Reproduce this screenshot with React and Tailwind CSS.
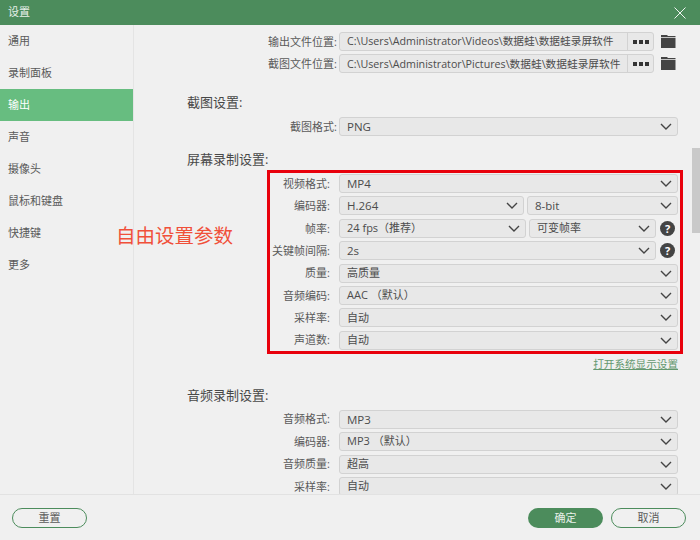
import React from "react";

const FONT = '"Open Sans", "Noto Sans CJK SC", sans-serif';

function Chevron() {
  return (
    <svg width="12" height="7" viewBox="0 0 12 7" fill="none" className="shrink-0">
      <path d="M1 1 L6 6 L11 1" stroke="#444" strokeWidth="1.4" />
    </svg>
  );
}

function Select({ text, cjk = false, className = "flex-1" }) {
  return (
    <div className={`${className} h-[19px] min-w-0 flex items-center justify-between pl-[7px] pr-[5px] bg-[#e8e8e8] border border-[#d2d2d2] rounded-[3px] ${cjk ? "text-[11px]" : "text-[11.5px]"} text-[#4c4c4c] whitespace-pre`}>
      <span>{text}</span>
      <Chevron />
    </div>
  );
}

function Help() {
  return (
    <div className="w-[15px] h-[15px] shrink-0 rounded-full bg-[#444] text-white text-[11px] font-bold flex items-center justify-center leading-none">?</div>
  );
}

function Folder() {
  return (
    <svg width="15" height="13" viewBox="0 0 15 13" className="shrink-0">
      <path d="M0 0 H6 L7 1 H14.5 V2.2 H0 Z" fill="#444" />
      <path d="M0 3 H14.5 V13 H0 Z" fill="#444" />
    </svg>
  );
}

function PathRow({ label, path }) {
  return (
    <div className="flex items-center h-[19px]">
      <div className="w-[152px] shrink-0 pr-[2px] pt-[1px] text-right text-[11px] text-[#5a5a5a]">{label}</div>
      <div className="w-[315px] h-[19px] flex items-center bg-[#e8e8e8] border border-[#d2d2d2] rounded-[3px] text-[10.7px] text-[#4c4c4c]">
        <span className="flex-1 pl-[7px] whitespace-nowrap">{path}</span>
        <span className="w-[26px] h-full shrink-0 border-l border-[#d2d2d2] flex items-center justify-center gap-[2px]">
          <i className="w-[4px] h-[4px] bg-[#333]" />
          <i className="w-[4px] h-[4px] bg-[#333]" />
          <i className="w-[4px] h-[4px] bg-[#333]" />
        </span>
      </div>
      <div className="ml-[7px]"><Folder /></div>
    </div>
  );
}

function Row({ label, labelW = "w-[152px] pr-[9px]", children }) {
  return (
    <div className="flex items-center h-[19px]">
      <div className={`${labelW} shrink-0 pt-[1px] text-right text-[11px] text-[#5a5a5a] whitespace-nowrap`}>{label}</div>
      <div className="flex-1 min-w-0 flex items-center gap-[3px]">{children}</div>
    </div>
  );
}

const Heading = ({ children, className }) => (
  <div className={`${className} h-[20px] leading-[18px] text-[13px] text-[#484848]`}>{children}</div>
);

const nav = ["通用", "录制面板", "输出", "声音", "摄像头", "鼠标和键盘", "快捷键", "更多"];
const BOX = "w-[69px] pr-[9px]";

export default function App() {
  return (
    <div className="relative w-[700px] h-[540px] flex flex-col bg-[#f0f0f0] overflow-hidden" style={{ fontFamily: FONT }}>
      <div className="h-[25px] shrink-0 flex items-center justify-between pl-[8px] pr-[14px] bg-[#4c8c5c] text-[11px] text-[#e8f0ea]">
        <span>设置</span>
        <svg width="12" height="12" viewBox="0 0 12 12" fill="none">
          <path d="M0.5 0.5 L11.5 11.5 M11.5 0.5 L0.5 11.5" stroke="#eef4f0" strokeWidth="1" />
        </svg>
      </div>

      <div className="flex-1 min-h-0 flex">
        <div className="w-[134px] shrink-0 border-r border-[#e4e4e4]">
          {nav.map((n) => (
            <div key={n} className={`h-[32px] flex items-center pl-[8px] pt-[1px] text-[11px] ${n === "输出" ? "bg-[#67bd80] text-white" : "text-[#5a5a5a]"}`}>{n}</div>
          ))}
        </div>

        <div className="flex-1 min-w-0 overflow-hidden pt-[7px] pl-[53px] pr-[22px]">
          <div className="flex flex-col gap-[3.4px]">
            <PathRow label="输出文件位置:" path="C:\Users\Administrator\Videos\数据蛙\数据蛙录屏软件" />
            <PathRow label="截图文件位置:" path="C:\Users\Administrator\Pictures\数据蛙\数据蛙录屏软件" />
          </div>

          <Heading className="mt-[19.6px]">截图设置:</Heading>
          <div className="mt-[4px]">
            <Row label="截图格式:" labelW="w-[152px] pr-[2px]"><Select text="PNG" /></Row>
          </div>

          <Heading className="mt-[14px]">屏幕录制设置:</Heading>
          <div className="ml-[80px] -mr-[5px] border-[3px] border-[#e8000c] pt-[1px] pb-[1.5px] pl-0 pr-[2px] flex flex-col gap-[3.4px]">
            <Row label="视频格式:" labelW={BOX}><Select text="MP4" /></Row>
            <Row label="编码器:" labelW={BOX}>
              <Select text="H.264" className="w-[185px]" />
              <Select text="8-bit" />
            </Row>
            <Row label="帧率:" labelW={BOX}>
              <Select text="24 fps（推荐）" cjk className="w-[187px]" />
              <Select text="可变帧率" cjk />
              <div className="ml-[1px] mr-[3px]"><Help /></div>
            </Row>
            <Row label="关键帧间隔:" labelW={BOX}>
              <Select text="2s" />
              <div className="ml-[1px] mr-[3px]"><Help /></div>
            </Row>
            <Row label="质量:" labelW={BOX}><Select text="高质量" cjk /></Row>
            <Row label="音频编码:" labelW={BOX}><Select text="AAC （默认）" cjk /></Row>
            <Row label="采样率:" labelW={BOX}><Select text="自动" cjk /></Row>
            <Row label="声道数:" labelW={BOX}><Select text="自动" cjk /></Row>
          </div>

          <div className="mt-[2.5px] h-[14px] leading-[14px] text-right text-[10.6px] text-[#64986f] underline">打开系统显示设置</div>

          <Heading className="mt-[15px]">音频录制设置:</Heading>
          <div className="mt-[4px] flex flex-col gap-[3.4px]">
            <Row label="音频格式:"><Select text="MP3" /></Row>
            <Row label="编码器:"><Select text="MP3 （默认）" cjk /></Row>
            <Row label="音频质量:"><Select text="超高" cjk /></Row>
            <Row label="采样率:"><Select text="自动" cjk /></Row>
          </div>
        </div>
      </div>

      <div className="h-[46px] shrink-0 border-t border-[#e2e2e2] flex items-center justify-between pl-[12px] pr-[14px]">
        <button className="w-[75px] h-[20px] pt-[1px] rounded-full border-[1.5px] border-[#4c8c5c] text-[11px] text-[#5a5a5a] flex items-center justify-center">重置</button>
        <div className="flex gap-[8px]">
          <button className="w-[75px] h-[20px] pt-[1px] rounded-full bg-[#4c8c5c] text-[11px] text-[#e8f0ea] flex items-center justify-center">确定</button>
          <button className="w-[75px] h-[20px] pt-[1px] rounded-full border-[1.5px] border-[#4c8c5c] text-[11px] text-[#5a5a5a] flex items-center justify-center">取消</button>
        </div>
      </div>

      <div className="absolute left-[692px] top-[148px] w-[8px] h-[85px] bg-[#c9c9c9]" />
      <div className="absolute left-[116px] top-[223px] text-[19.5px] leading-[26px] text-[#f0503a]">自由设置参数</div>
    </div>
  );
}
